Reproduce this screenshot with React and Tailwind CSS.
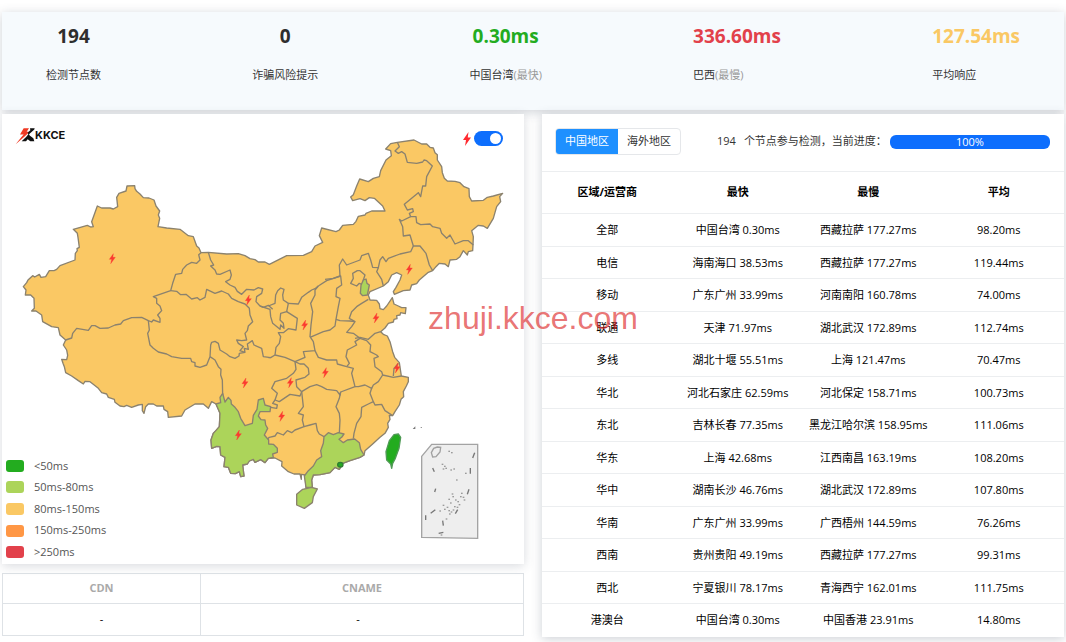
import { useState } from 'react'
import clsx from 'clsx'

const STATS = [
  { value: '194', label: '检测节点数', color: 'text-[#2e2e2e]', center: true },
  { value: '0', label: '诈骗风险提示', color: 'text-[#2e2e2e]', center: true },
  { value: '0.30ms', label: '中国台湾', note: '(最快)', color: 'text-[#23ac1f]', center: true },
  { value: '336.60ms', label: '巴西', note: '(最慢)', color: 'text-[#e2414b]' },
  { value: '127.54ms', label: '平均响应', color: 'text-[#fac864]' },
]

const LEGEND = [
  { label: '<50ms', color: 'bg-[#23ac1f]' },
  { label: '50ms-80ms', color: 'bg-[#acd45a]' },
  { label: '80ms-150ms', color: 'bg-[#fac864]' },
  { label: '150ms-250ms', color: 'bg-[#ff9745]' },
  { label: '>250ms', color: 'bg-[#e2414b]' },
]

const COLUMNS = ['区域/运营商', '最快', '最慢', '平均']

const ROWS = [
  ['全部', '中国台湾 0.30ms', '西藏拉萨 177.27ms', '98.20ms'],
  ['电信', '海南海口 38.53ms', '西藏拉萨 177.27ms', '119.44ms'],
  ['移动', '广东广州 33.99ms', '河南南阳 160.78ms', '74.00ms'],
  ['联通', '天津 71.97ms', '湖北武汉 172.89ms', '112.74ms'],
  ['多线', '湖北十堰 55.51ms', '上海 121.47ms', '70.47ms'],
  ['华北', '河北石家庄 62.59ms', '河北保定 158.71ms', '100.73ms'],
  ['东北', '吉林长春 77.35ms', '黑龙江哈尔滨 158.95ms', '111.06ms'],
  ['华东', '上海 42.68ms', '江西南昌 163.19ms', '108.20ms'],
  ['华中', '湖南长沙 46.76ms', '湖北武汉 172.89ms', '107.80ms'],
  ['华南', '广东广州 33.99ms', '广西梧州 144.59ms', '76.26ms'],
  ['西南', '贵州贵阳 49.19ms', '西藏拉萨 177.27ms', '99.31ms'],
  ['西北', '宁夏银川 78.17ms', '青海西宁 162.01ms', '111.75ms'],
  ['港澳台', '中国台湾 0.30ms', '中国香港 23.91ms', '14.80ms'],
]

// ─── Map data ─────────────────────────────────────────────────────────────────
const MAINLAND =
  'M70 860L80 848L84 840L98 827L104 831L118 823L123 832L137 830L148 812L162 812L170 808L180 797L225 780L226 760L232 752L231 746L238 742L234 712L232 700L220 688L262 676L272 681L280 680L275 665L292 618L305 624L330 624L340 627L353 620L350 592L357 580L378 573L381 558L404 557L405 566L410 574L420 582L430 593L447 594L462 600L468 618L479 633L475 645L479 655L474 680L500 684L540 688L565 707L580 710L590 738L597 744L603 758L625 757L680 762L715 761L735 767L750 776L765 779L775 786L795 786L808 793L860 767L910 766L935 755L945 738L968 727L958 707L965 684L1008 695L1018 690L1028 676L1060 673L1068 664L1075 649L1095 645L1098 640L1115 633L1155 633L1148 618L1123 595L1108 593L1095 602L1080 596L1058 602L1052 591L1060 584L1070 558L1079 537L1105 545L1120 535L1138 530L1142 512L1158 480L1174 467L1172 452L1157 447L1172 431L1192 427L1242 420L1265 432L1280 432L1290 442L1300 444L1305 458L1312 464L1312 480L1325 500L1327 518L1333 535L1342 543L1365 544L1380 548L1392 560L1407 566L1408 590L1415 603L1450 601L1462 592L1480 588L1508 580L1499 590L1502 605L1490 620L1480 655L1462 685L1450 678L1435 676L1415 692L1420 710L1419 735L1418 752L1405 755L1402 765L1390 752L1380 770L1370 778L1350 780L1345 800L1335 792L1318 790L1308 800L1298 812L1285 817L1258 840L1250 851L1235 855L1230 870L1210 872L1183 883L1180 875L1188 862L1200 840L1205 825L1190 818L1175 825L1165 845L1150 858L1110 875L1105 885L1110 900L1130 901L1138 912L1140 926L1150 929L1160 918L1177 893L1182 912L1195 918L1205 923L1218 923L1216 941L1202 938L1200 945L1190 947L1191 956L1182 958L1180 966L1165 970L1155 984L1142 995L1150 1003L1162 1008L1170 1025L1178 1055L1184 1072L1198 1088L1204 1128L1225 1132L1225 1145L1219 1158L1210 1175L1211 1190L1203 1198L1198 1215L1185 1235L1178 1247L1168 1246L1170 1258L1163 1270L1165 1282L1155 1300L1140 1312L1118 1332L1095 1352L1092 1365L1080 1372L1050 1382L1028 1390L1018 1408L1005 1402L990 1418L980 1420L960 1424L940 1425L935 1440L937 1462L918 1462L915 1425L904 1423L904 1438L900 1422L882 1422L865 1415L845 1398L846 1385L825 1374L805 1375L795 1388L782 1379L765 1387L760 1378L748 1383L742 1392L728 1395L732 1428L722 1430L718 1415L706 1421L692 1420L685 1402L672 1400L675 1372L662 1365L660 1340L650 1339L635 1345L633 1320L640 1300L648 1292L658 1280L660 1240L655 1228L648 1212L635 1205L625 1225L610 1212L585 1212L555 1230L545 1248L505 1252L503 1235L492 1228L490 1218L470 1218L460 1212L445 1212L437 1220L432 1240L427 1232L427 1213L415 1215L395 1222L380 1216L372 1220L360 1218L345 1207L343 1198L325 1192L320 1182L305 1178L295 1165L270 1145L255 1144L250 1152L235 1142L215 1128L197 1118L193 1100L189 1090L185 1078L200 1079L203 1066L200 1050L190 1035L197 1020L180 1005L175 983L155 980L128 965L125 945L108 933L95 933L103 925L102 895L92 885L76 885L78 870Z'

const YUNNAN =
  'M668 1180L675 1206L685 1192L693 1201L694 1212L705 1222L715 1235L722 1255L735 1277L757 1270L760 1246L771 1228L775 1200L790 1195L795 1215L812 1220L810 1235L780 1235L775 1248L783 1259L795 1260L797 1275L803 1285L793 1305L806 1320L806 1332L820 1333L832 1345L832 1357L818 1362L820 1372L805 1375L795 1388L782 1379L765 1387L760 1378L748 1383L742 1392L728 1395L732 1428L722 1430L718 1415L706 1421L692 1420L685 1402L672 1400L675 1372L662 1365L660 1340L650 1339L635 1345L633 1320L640 1300L658 1280L660 1240L648 1212L662 1208L660 1192Z'

const GUANGDONG =
  'M972 1310L985 1298L1000 1304L1015 1298L1032 1302L1025 1312L1017 1318L1030 1328L1042 1320L1064 1317L1078 1328L1082 1348L1092 1365L1080 1372L1050 1382L1028 1390L1018 1408L1005 1402L990 1418L960 1424L940 1425L935 1440L937 1462L918 1462L913 1428L925 1412L940 1398L950 1380L965 1370L962 1352L970 1330Z'

const HAINAN = 'M890 1483L908 1468L935 1462L952 1467L940 1490L937 1508L913 1525L890 1515Z'
const TAIWAN = 'M1158 1355L1168 1322L1182 1304L1195 1302L1202 1312L1197 1345L1186 1375L1178 1390L1175 1405L1172 1392L1160 1380Z'
const TIANJIN = 'M1090 840L1098 837L1101 850L1108 855L1102 885L1088 887L1081 880L1083 856Z'

const BORDERS = [
  'M197 1020L215 1014L218 1000L230 985L265 991L275 977L285 977L300 985L325 984L345 975L362 972L370 962L395 953L425 952L445 962L455 966L460 960L480 967L480 955L473 945L485 932L480 918L470 910L470 895L460 890L512 872L518 850L527 823L545 820L548 808L560 795L575 787L590 790L600 780L596 764L603 758',
  'M625 757L632 780L641 795L632 798L645 810L650 822L660 823L690 810L694 825L690 838L677 845L690 855L705 862L712 874L725 883L740 868L762 870L775 863L788 867L785 880L770 890L768 905L780 918L790 922L805 916L818 928',
  'M512 872L530 874L542 884L558 883L575 897L592 893L600 900L615 892L620 868L645 880L665 873L685 882L695 895L715 905L735 912L748 925L750 945L758 965L745 978L742 992L735 1000L740 1020L725 1022L710 1020L715 1030L730 1040L720 1052L735 1057L733 1045L745 1048L742 1032L757 1022L762 1035L785 1045L790 1070L812 1073',
  'M445 962L448 990L443 1000L450 1035L460 1045L475 1056L500 1062L515 1070L545 1075L572 1075L575 1085L585 1088L585 1098L600 1102L620 1095L630 1070',
  'M630 1070L632 1035L635 1027L645 1024L655 1030L660 1050L680 1062L690 1070L705 1075L717 1068L718 1060L735 1057',
  'M630 1070L645 1080L655 1100L663 1108L662 1125L667 1140L668 1185',
  'M780 918L810 928L812 950L818 970L840 988L842 975L852 985L850 970L840 960L842 940L860 935L865 910L850 900L848 885L852 868L842 864L833 872L827 885L825 910L805 918',
  'M865 910L895 912L905 892L925 877L935 870L945 866L955 858',
  'M860 935L892 955L888 990L865 986L850 998L835 998L842 1010L838 1030L828 1042L825 1065L855 1072L885 1085',
  'M805 1073L812 1073L825 1065',
  'M955 858L945 870L945 885L932 910L938 935L933 975L930 1010L940 1025L945 1052L910 1055L915 1072L885 1085',
  'M955 858L980 842L1022 828L1025 855L1010 865L1008 890L1020 895L1015 920L1008 958L1005 978L990 990L970 995L930 1012',
  'M945 1052L955 1072L980 1080L1010 1080L1012 1092L1040 1100L1060 1105L1055 1120L1065 1160L1022 1176L1020 1185L1010 1172L980 1168L965 1160L950 1154L930 1160L905 1175',
  'M885 1085L888 1108L880 1120L860 1135L825 1145L815 1165L832 1180L825 1200L838 1205L870 1183L900 1188L905 1175',
  'M885 1085L900 1092L912 1092L925 1105L927 1122L915 1132L888 1140L890 1160L905 1175',
  'M825 1200L818 1210L832 1215L830 1225L812 1222',
  'M905 1175L910 1220L895 1240L910 1245L907 1260L912 1280L885 1290L875 1298L862 1292L850 1305L832 1298L825 1308L808 1312L800 1320',
  'M1022 1176L1018 1195L1008 1220L1018 1240L1020 1260L1018 1300',
  'M912 1280L930 1275L948 1270L952 1292L958 1302L972 1310',
  'M1008 958L1020 962L1050 963L1065 965L1055 980L1040 997L1060 1000L1080 1015L1065 1025L1070 1035L1042 1050L1038 1070L1048 1090L1040 1100',
  'M1065 965L1048 955L1055 935L1070 920L1085 910L1105 898',
  'M1065 1015L1080 1012L1105 1018L1125 1000L1142 995',
  'M1080 1015L1100 1022L1112 1035L1110 1055L1130 1065L1135 1070L1122 1075L1125 1100L1145 1115L1148 1125L1180 1132L1204 1128',
  'M1148 1125L1135 1145L1120 1155L1115 1165L1095 1155L1075 1160L1065 1160',
  'M1115 1165L1110 1180L1120 1205L1105 1212L1085 1222L1083 1250L1070 1270L1062 1300L1060 1316',
  'M1120 1205L1125 1215L1145 1213L1155 1232L1178 1247',
  'M1180 1128L1182 1105L1195 1090',
  'M975 838L1000 835L1020 828L1018 795L1028 777L1040 795L1080 780L1085 767L1105 760L1112 780L1118 802L1135 803L1140 780L1148 770L1158 785L1165 775L1200 762L1232 755L1240 738',
  'M1135 803L1130 815L1145 838L1150 858',
  'M1060 835L1058 820L1072 812L1080 812L1095 825L1090 840L1090 855L1078 850L1070 858L1052 850Z',
  'M1192 427L1198 440L1185 453L1195 460L1205 455L1215 462L1222 487L1250 490L1268 486L1272 480L1280 482L1297 498L1280 530L1277 558L1268 558L1262 590L1255 578L1213 613L1222 630L1238 626L1240 635L1228 640L1232 650L1205 663L1198 658L1208 680L1210 708L1230 705L1240 738L1260 738L1278 760L1288 795L1298 812',
  'M1232 650L1248 650L1250 668L1262 674L1290 672L1298 680L1320 685L1325 700L1340 715L1350 705L1365 732L1390 722L1405 722L1420 735',
]

const NODES = [
  [336, 776], [744, 900], [1227, 808], [913, 975], [1127, 954], [975, 1118],
  [870, 1148], [844, 1249], [734, 1149], [714, 1305], [1190, 1104],
]

// islands and dash marks of the inset
const INSET_MARKS = [
  'M1418 1374L1424 1358', 'M1298 1404L1303 1415', 'M1411 1404V1421', 'M1304 1476L1307 1466',
  'M1402 1483L1407 1468', 'M1277 1546V1560', 'M1292 1540L1306 1529', 'M1366 1541L1373 1529',
  'M1328 1562L1330 1577', 'M1316 1600L1330 1597',
]

const INSET_DOTS = [
  [1345, 1352], [1353, 1356], [1325, 1391], [1332, 1397], [1328, 1405], [1336, 1403], [1351, 1408],
  [1360, 1405], [1368, 1438], [1395, 1418], [1355, 1480], [1357, 1488], [1345, 1496], [1365, 1498],
  [1372, 1503], [1380, 1488], [1388, 1490], [1350, 1507], [1328, 1514], [1340, 1520], [1362, 1518],
  [1376, 1512], [1345, 1530], [1352, 1534], [1358, 1528], [1332, 1526], [1318, 1531], [1370, 1520],
  [1347, 1540], [1337, 1555], [1383, 1478], [1391, 1498], [1322, 1603],
]

function Bolt({ className }) {
  return (
    <svg viewBox="0 0 16 28" className={className} aria-hidden="true">
      <path d="M11 0L0 16H6L4 28L16 11H9.500Z" fill="#ff2a2f" />
    </svg>
  )
}

function ChinaMap() {
  return (
    <svg viewBox="6 342 1566 1350" className="block w-full" role="img" aria-label="中国地区">
      <g stroke="#8b826e" strokeWidth="4" strokeLinejoin="round">
        <path d={MAINLAND} fill="#fac864" />
        {BORDERS.map(d => <path key={d} d={d} fill="none" />)}
        <path d={YUNNAN} fill="#acd45a" />
        <path d={GUANGDONG} fill="#acd45a" />
        <path d={HAINAN} fill="#acd45a" />
        <path d={TIANJIN} fill="#acd45a" />
        <path d={TAIWAN} fill="#23ac1f" stroke="#4f9a55" />
        <ellipse cx="1021" cy="1394" rx="8" ry="7" fill="#23ac1f" stroke="#2f7d33" />
      </g>
      <path d="M1238 1287L1246 1279V1287Z M1262 1282H1266V1284H1262Z" fill="#777" />

      {/* South China Sea inset */}
      <path d="M1265 1369L1295 1333H1433V1615L1265 1612Z" fill="#eeeeee" stroke="#a3a3a3" strokeWidth="4" />
      <path d="M1294 1358L1301 1345L1312 1341L1322 1342L1320 1356L1308 1370L1298 1371Z" fill="none" stroke="#a0a0a0" strokeWidth="4" />
      <g stroke="#777" strokeWidth="4" fill="none">
        {INSET_MARKS.map(d => <path key={d} d={d} />)}
      </g>
      <g fill="#9a9a9a">
        {INSET_DOTS.map(([x, y]) => <rect key={`${x}-${y}`} x={x} y={y} width="5" height="4" />)}
      </g>

      {NODES.map(([x, y]) => (
        <path
          key={`${x}-${y}`}
          transform={`translate(${x - 8} ${y - 15})`}
          d="M12 0L0 17H7L4 30L18 11H10.500Z"
          fill="#fb3a30"
          stroke="#fb3a30"
          strokeWidth="1"
        />
      ))}
    </svg>
  )
}

function Logo() {
  return (
    <div className="absolute top-3 left-[13px] flex items-center">
      <svg viewBox="46 52 60 56" className="h-[19px] w-5" aria-hidden="true">
        <path d="M72 58H88L81 69H90L74 84L48 106L66 84L72 77H61Z" fill="#f03a24" />
        <path d="M91 58H105L104 62L88 76L90 80L101 88L104 97H92L84 91L79 97H66L80 84L86 76L84 72L92 64Z" fill="#111" />
      </svg>
      <span className="font-[Inter] text-[11px] font-bold text-[#111]">KKCE</span>
    </div>
  )
}

// ─── Panels ───────────────────────────────────────────────────────────────────
function StatBar() {
  return (
    <header className="flex justify-between bg-[#f6fafd] px-11 pt-2.5 pb-[26px] shadow-[0_2px_10px_rgba(60,70,90,0.25)]">
      {STATS.map(s => (
        <div key={s.label} className={clsx(s.center && 'text-center')}>
          <div className={clsx('text-[19px] leading-7 font-bold', s.color)}>{s.value}</div>
          <div className="mt-4 text-[11px] leading-[18px] text-[#333]">
            {s.label}
            {s.note && <span className="text-[#999]">{s.note}</span>}
          </div>
        </div>
      ))}
    </header>
  )
}

function MapPanel() {
  const [live, setLive] = useState(true)

  return (
    <section className="relative bg-white shadow-[0_2px_10px_rgba(60,70,90,0.2)]">
      <ChinaMap />
      <Logo />
      <label className="absolute top-[17px] right-[21px] flex items-center gap-[3px]">
        <Bolt className="h-3.5 w-2" />
        <input
          type="checkbox"
          role="switch"
          aria-label="闪电"
          checked={live}
          onChange={e => setLive(e.target.checked)}
          className="flex h-[15px] w-[29px] appearance-none items-center rounded-full bg-gray-300 px-0.5 before:size-[11px] before:rounded-full before:bg-white checked:justify-end checked:bg-[#0d6efd]"
        />
      </label>
      <ul className="absolute bottom-px left-1 flex h-[108px] flex-col text-[11px] text-[#555]">
        {LEGEND.map(item => (
          <li key={item.label} className="flex flex-1 items-center gap-2.5">
            <span className={clsx('h-3 w-[18px] rounded-[3px]', item.color)} />
            {item.label}
          </li>
        ))}
      </ul>
    </section>
  )
}

function DnsTable() {
  return (
    <table className="mt-[9px] w-full table-fixed border-collapse bg-white text-center text-[11px]">
      <thead>
        <tr className="h-[30px] text-[#aaa]">
          <th className="w-[38%] border border-[#dee2e6] font-bold">CDN</th>
          <th className="border border-[#dee2e6] font-bold">CNAME</th>
        </tr>
      </thead>
      <tbody>
        <tr className="h-8">
          <td className="border border-[#dee2e6]">-</td>
          <td className="border border-[#dee2e6] pr-2">-</td>
        </tr>
      </tbody>
    </table>
  )
}

function RegionPanel() {
  const [region, setRegion] = useState('中国地区')
  const progress = 100

  return (
    <section className="bg-white shadow-[0_2px_10px_rgba(60,70,90,0.25)]">
      <div className="flex h-[57px] items-center pr-3.5 pb-0.5 pl-[13px] text-[11px] text-[#333]">
        <div className="flex h-[27px] w-[126px] overflow-hidden rounded border border-[#e5e7ea]">
          {['中国地区', '海外地区'].map(name => (
            <button
              key={name}
              type="button"
              onClick={() => setRegion(name)}
              className={clsx('flex-1', region === name && 'bg-[#1e90ff] text-white')}
            >
              {name}
            </button>
          ))}
        </div>
        <span className="ml-9">194</span>
        <span className="ml-2 whitespace-nowrap">个节点参与检测，当前进度：</span>
        <div role="progressbar" aria-valuenow={progress} className="ml-[3px] h-3.5 flex-1 overflow-hidden rounded-md bg-[#e9ecef]">
          <div
            className="bg-[#0d6efd] text-center leading-3.5 text-white"
            style={{ width: `${progress}%` }}
          >
            {progress}%
          </div>
        </div>
      </div>
      <table className="w-full table-fixed border-collapse text-center text-[11px] leading-4 text-black">
        <thead>
          <tr className="h-[42px] border-t border-[#eceef0]">
            {COLUMNS.map(c => <th key={c} className="pb-0.5 font-bold">{c}</th>)}
          </tr>
        </thead>
        <tbody>
          {ROWS.map(row => (
            <tr key={row[0]} className="border-t border-[#eceef0] odd:h-[33px] even:h-8">
              {row.map((cell, i) => <td key={i} className="whitespace-nowrap">{cell}</td>)}
            </tr>
          ))}
        </tbody>
      </table>
    </section>
  )
}

export default function App() {
  return (
    <main className="relative bg-white px-0.5 pt-3 pb-1.5 font-['Open_Sans','Noto_Sans_CJK_SC',sans-serif]">
      <StatBar />
      <div className="mt-1 grid grid-cols-2 items-start gap-[18px]">
        <div>
          <MapPanel />
          <DnsTable />
        </div>
        <RegionPanel />
      </div>
      <div className="pointer-events-none absolute inset-x-0 top-0 bottom-1.5 flex items-center justify-center font-['Liberation_Sans',sans-serif] text-[32px] text-[#dc2626]/65">
        zhuji.kkce.com
      </div>
    </main>
  )
}
